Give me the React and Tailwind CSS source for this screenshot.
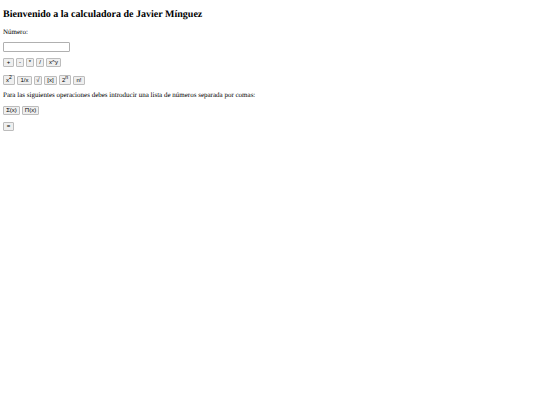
function Key({ children, label, className = "w-[8px] h-[9px]" }) {
  return (
    <button
      type="button"
      aria-label={label}
      className={`flex shrink-0 items-center justify-center whitespace-nowrap rounded-[1px] border border-[#bcbcbc] bg-[#efefef] font-['Liberation_Sans',Arial,sans-serif] text-[6px] leading-[7px] text-black ${className}`}
    >
      <span>{children}</span>
    </button>
  );
}

function Sup({ children }) {
  return <sup className="text-[5px] leading-[0px]">{children}</sup>;
}

export default function App() {
  return (
    <main className="px-[3px] pt-[9px] font-['Liberation_Serif','Times_New_Roman',serif] text-[7px] leading-[8px] text-black [text-rendering:geometricPrecision]">
      <h1 className="text-[10px] font-bold leading-[11px]">
        Bienvenido a la calculadora de Javier Mínguez
      </h1>
      <form className="mt-[8px]" onSubmit={(event) => event.preventDefault()}>
        <label htmlFor="numero" className="block">
          Número:
        </label>
        <input
          id="numero"
          type="text"
          className="mt-[6px] block h-[10px] w-[67px] rounded-[1px] border border-[#b0b0b0] bg-white px-px font-['Liberation_Sans',Arial,sans-serif] text-[6px] leading-[8px] outline-none"
        />
        <div className="mt-[6px] flex gap-[2px]">
          <Key className="h-[9px] w-[11px]">+</Key>
          <Key>-</Key>
          <Key>*</Key>
          <Key>/</Key>
          <Key className="h-[9px] w-[15px]">x^y</Key>
        </div>
        <div className="mt-[8px] flex items-end gap-[2px]">
          <Key className="h-[10px] w-[12px]">x<Sup>2</Sup></Key>
          <Key className="h-[9px] w-[15px]">1/x</Key>
          <Key>√</Key>
          <Key className="h-[9px] w-[13px]">[x]</Key>
          <Key className="h-[10px] w-[12px]">2<Sup>n</Sup></Key>
          <Key className="h-[9px] w-[12px]">n!</Key>
        </div>
        <p className="mt-[6px]">
          Para las siguientes operaciones debes introducir una lista de números separada por comas:
        </p>
        <div className="mt-[7px] flex gap-[2px]">
          <Key className="h-[9px] w-[17px]">Σ(x)</Key>
          <Key className="h-[9px] w-[17px]">Π(x)</Key>
        </div>
        <div className="mt-[7px] flex">
          <Key className="h-[9px] w-[11px]" label="Igual">=</Key>
        </div>
      </form>
    </main>
  );
}
